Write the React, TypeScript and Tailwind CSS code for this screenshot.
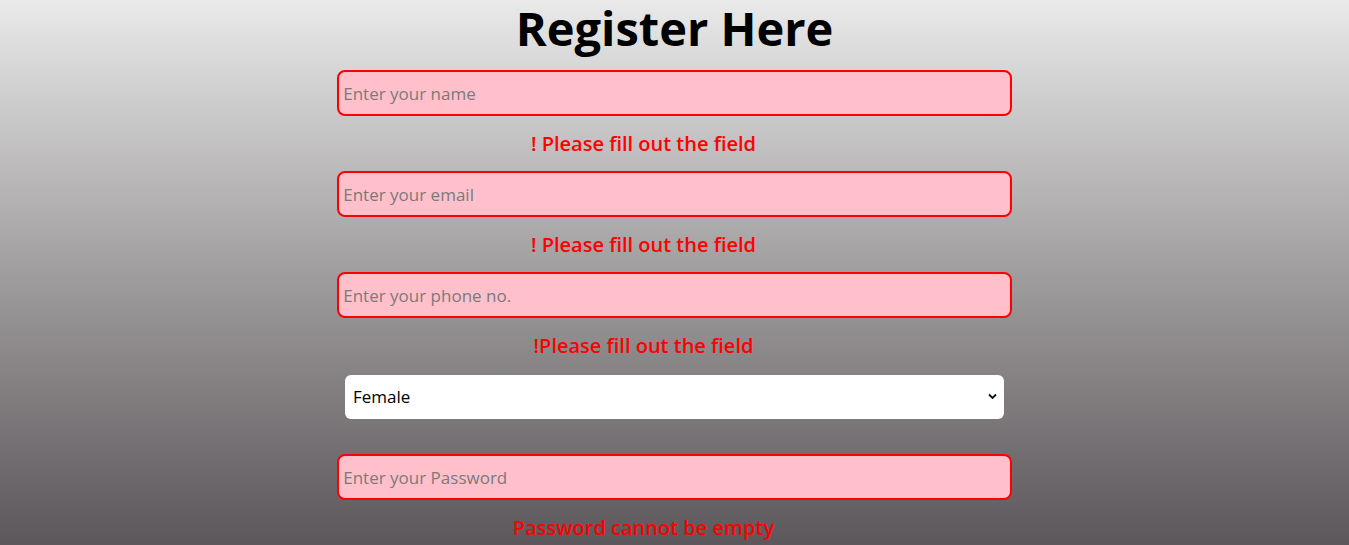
import React from "react";

const font = { fontFamily: '"Open Sans", "Noto Sans", sans-serif' };

function Field({ placeholder, type = "text" }: { placeholder: string; type?: string }) {
  return (
    <input
      type={type}
      placeholder={placeholder}
      className="block w-1/2 h-[46px] rounded-[8px] border-2 border-[#ff0000] bg-[#ffc0cb] px-[4px] text-[17px] text-black placeholder:text-[#7a7a7a] outline-none"
    />
  );
}

function ErrorRow({ text }: { text: string }) {
  return (
    <div className="flex h-[55px] w-1/2 items-center justify-center pr-[62px]">
      <span className="text-[20px] font-semibold text-[#ff0000]">{text}</span>
    </div>
  );
}

export default function App() {
  return (
    <div
      className="min-h-screen w-full bg-gradient-to-b from-[#eaeaea] to-[#5a5558]"
      style={font}
    >
      <form className="flex flex-col items-center">
        <h1 className="-mt-[4px] mb-[10px] text-[47px] leading-[64px] font-bold text-black">
          Register Here
        </h1>
        <Field placeholder="Enter your name" />
        <ErrorRow text="! Please fill out the field" />
        <Field placeholder="Enter your email" type="email" />
        <ErrorRow text="! Please fill out the field" />
        <Field placeholder="Enter your phone no." />
        <ErrorRow text="!Please fill out the field" />
        <div className="relative mt-[2px] h-[44px] w-[659px]">
          <select
            defaultValue="Female"
            className="h-full w-full appearance-none rounded-[6px] bg-white pl-[8px] text-[17px] text-black outline-none"
          >
            <option>Male</option>
            <option>Female</option>
            <option>Other</option>
          </select>
          <svg
            className="pointer-events-none absolute right-[7px] top-[18px]"
            width="9"
            height="7"
            viewBox="0 0 9 7"
          >
            <path d="M1 1.5 L4.5 5 L8 1.5" fill="none" stroke="#111" strokeWidth="1.8" />
          </svg>
        </div>
        <div className="h-[35px]" />
        <Field placeholder="Enter your Password" type="password" />
        <ErrorRow text="Password cannot be empty" />
      </form>
    </div>
  );
}
